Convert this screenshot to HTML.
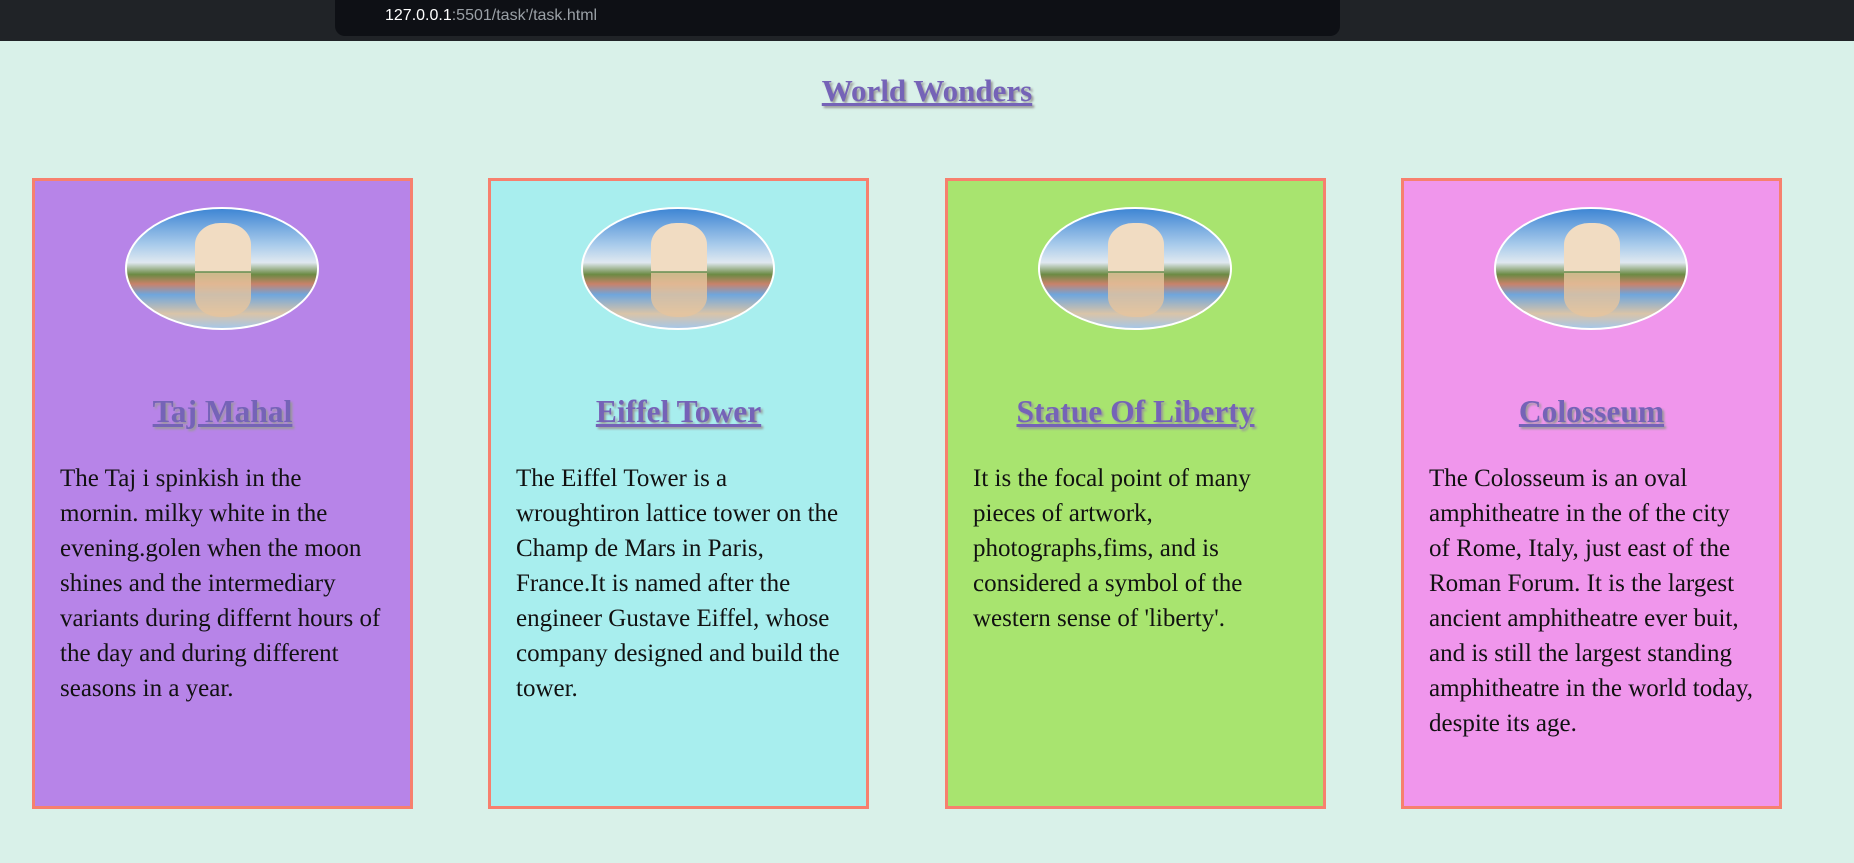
<!DOCTYPE html>
<html><head><meta charset="utf-8"><style>
*{box-sizing:border-box;margin:0;padding:0}
body{width:1854px;height:863px;overflow:hidden;background:#d9f1e9;font-family:"Liberation Serif",serif;position:relative}
.bar{height:41px;background:#202327;position:relative}
.url{position:absolute;left:335px;top:0;width:1005px;height:36px;background:#0e1015;border-radius:0 0 10px 10px}
.url span{position:absolute;left:50px;top:7px;font:16px "Liberation Sans",sans-serif;color:#9aa0a6}
.url b{font-weight:normal;color:#fff}
h1{position:absolute;top:73px;left:0;width:100%;text-align:center;font-size:31px;color:#7563b7;text-decoration:underline;text-shadow:2px 2px 2px #999}
.card{position:absolute;top:178px;width:381px;height:631px;border:3px solid #f7806e}
.img{position:absolute;left:90px;top:26px;width:194px;height:123px;border:2px solid #fff;border-radius:50%;overflow:hidden;background:linear-gradient(#3f86d4 0%,#a9cbeb 30%,#dfe8f0 45%,#6b8a43 55%,#c9826a 63%,#6fa6dc 72%,#d9c4a8 88%,#a7c6e6 100%)}
.img:before{content:"";position:absolute;left:68px;top:14px;width:56px;height:48px;background:#f1dcc2;border-radius:45% 45% 0 0}
.img:after{content:"";position:absolute;left:68px;top:64px;width:56px;height:44px;background:#e6c49d;border-radius:0 0 45% 45%;opacity:.8}
h2{position:absolute;top:213px;left:0;width:100%;text-align:center;font-size:31.5px;color:#7563b7;text-decoration:underline;text-shadow:2px 2px 2px #999}
p{position:absolute;top:280px;left:25px;width:325px;font-size:25px;line-height:35px;color:#111}
</style></head><body>
<div class="bar"><div class="url"><span><b>127.0.0.1</b>:5501/task'/task.html</span></div></div>
<h1>World Wonders</h1>
<div class="card" style="left:32px;background:#b784e8"><div class="img"></div><h2>Taj Mahal</h2><p>The Taj i spinkish in the mornin. milky white in the evening.golen when the moon shines and the intermediary variants during differnt hours of the day and during different seasons in a year.</p></div>
<div class="card" style="left:488px;background:#a8eeee"><div class="img"></div><h2>Eiffel Tower</h2><p>The Eiffel Tower is a wroughtiron lattice tower on the Champ de Mars in Paris, France.It is named after the engineer Gustave Eiffel, whose company designed and build the tower.</p></div>
<div class="card" style="left:945px;background:#a8e46f"><div class="img"></div><h2>Statue Of Liberty</h2><p>It is the focal point of many pieces of artwork, photographs,fims, and is considered a symbol of the western sense of 'liberty'.</p></div>
<div class="card" style="left:1401px;background:#f096ec"><div class="img"></div><h2>Colosseum</h2><p>The Colosseum is an oval amphitheatre in the of the city of Rome, Italy, just east of the Roman Forum. It is the largest ancient amphitheatre ever buit, and is still the largest standing amphitheatre in the world today, despite its age.</p></div>
</body></html>
